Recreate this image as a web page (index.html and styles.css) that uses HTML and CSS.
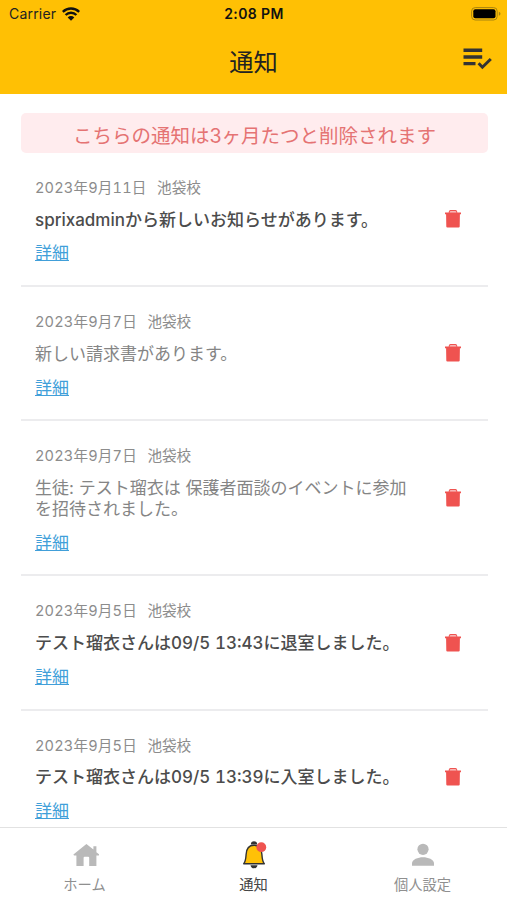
FILE: index.html
```html
<!DOCTYPE html>
<html lang="ja">
<head>
    <meta charset="UTF-8">
    <meta name="viewport" content="width=device-width, initial-scale=1.0">
    <title>通知</title>
    <link rel="stylesheet" href="styles.css">
</head>
<body>

    <!-- Icons used more than once -->
    <svg class="defs" width="0" height="0">
        <symbol id="trash" viewBox="0 0 18 20">
            <path d="M5 3.8l.6-1.6q.2-.7 1-.7h4.8q.8 0 1 .7l.6 1.6" fill="#f8b5b4" stroke="currentColor" stroke-width="1.1"/>
            <path d="M1 3.5h16v1.7h-1.1l-.2 12.3q0 1.1-1.1 1.1H3.4q-1.1 0-1.1-1.1L2.1 5.2H1z" fill="currentColor"/>
        </symbol>
    </svg>

    <div class="app">
        <!-- Status bar and title -->
        <header class="header">
            <div class="status">
                <div class="carrier">
                    <span>Carrier</span>
                    <svg class="wifi" width="18" height="14" viewBox="0 0 18 14">
                        <path d="M.8 4.9a11.6 11.6 0 0 1 16.4 0M3.6 8a7.6 7.6 0 0 1 10.8 0" fill="none" stroke="#111" stroke-width="2.4"/>
                        <path d="M5.7 10.4a4.6 4.6 0 0 1 6.6 0L9 13.7z" fill="#111"/>
                    </svg>
                </div>
                <div class="time">2:08 PM</div>
                <svg class="battery" width="30" height="14" viewBox="0 0 30 14">
                    <rect x=".6" y=".6" width="25.6" height="12.4" rx="3.6" fill="none" stroke="#a88410"/>
                    <rect x="2.3" y="2.3" width="22.2" height="9" rx="2" fill="#000"/>
                    <path d="M27.8 4.8q1.7.7 1.7 2t-1.7 2z" fill="#a88410"/>
                </svg>
            </div>
            <div class="title-row">
                <h1>通知</h1>
                <svg class="read-all" width="29" height="22" viewBox="0 0 29 22">
                    <path d="M.5 2.3h18.7M.5 9h18.7M.5 15.6h12" fill="none" stroke="#333" stroke-width="3.4"/>
                    <path d="M15.6 15.2l3.8 4L27.8 11" fill="none" stroke="#333" stroke-width="3"/>
                </svg>
            </div>
        </header>

        <!-- Notification list -->
        <main class="content">
            <div class="notice">こちらの通知は3ヶ月たつと削除されます</div>

            <div class="item unread">
                <div class="item-body">
                    <div class="meta"><span class="date">2023年9月11日</span><span>池袋校</span></div>
                    <div class="message">sprixadminから新しいお知らせがあります。</div>
                    <a class="detail" href="#">詳細</a>
                </div>
                <svg class="trash"><use href="#trash"/></svg>
            </div>

            <div class="item">
                <div class="item-body">
                    <div class="meta"><span class="date">2023年9月7日</span><span>池袋校</span></div>
                    <div class="message">新しい請求書があります。</div>
                    <a class="detail" href="#">詳細</a>
                </div>
                <svg class="trash"><use href="#trash"/></svg>
            </div>

            <div class="item">
                <div class="item-body">
                    <div class="meta"><span class="date">2023年9月7日</span><span>池袋校</span></div>
                    <div class="message">生徒: テスト瑠衣は 保護者面談のイベントに参加<br>を招待されました。</div>
                    <a class="detail" href="#">詳細</a>
                </div>
                <svg class="trash"><use href="#trash"/></svg>
            </div>

            <div class="item unread">
                <div class="item-body">
                    <div class="meta"><span class="date">2023年9月5日</span><span>池袋校</span></div>
                    <div class="message">テスト瑠衣さんは09/5 13:43に退室しました。</div>
                    <a class="detail" href="#">詳細</a>
                </div>
                <svg class="trash"><use href="#trash"/></svg>
            </div>

            <div class="item unread">
                <div class="item-body">
                    <div class="meta"><span class="date">2023年9月5日</span><span>池袋校</span></div>
                    <div class="message">テスト瑠衣さんは09/5 13:39に入室しました。</div>
                    <a class="detail" href="#">詳細</a>
                </div>
                <svg class="trash"><use href="#trash"/></svg>
            </div>
        </main>

        <!-- Bottom tabs -->
        <nav class="tabs">
            <div class="tab">
                <svg width="28" height="30" viewBox="0 0 28 30">
                    <path d="M15.4 4L2.4 14.6l.6.8h2.4V26h7.2v-8.2q0-1 1-1h3.6q1 0 1 1V26h7.2V15.4h2.4l.6-.8-3-2.4V6.2h-3v3.4z" fill="#b9b9b9"/>
                </svg>
                <span>ホーム</span>
            </div>
            <div class="tab active">
                <svg width="28" height="30" viewBox="0 0 28 30">
                    <path d="M10.8 4.5Q11 1.2 14 1.2t3.2 3.3z" fill="#333"/>
                    <path d="M10.5 25.2h7Q17 28.3 14 28.3t-3.5-3.1z" fill="#333"/>
                    <path d="M3.7 23.7c2-2.1 2.1-4.8 2.4-9.2C6.4 8.3 8.8 5.2 14 5.2s7.6 3.1 7.9 9.3c.3 4.4.4 7.1 2.4 9.2z" fill="#ffc107" stroke="#333" stroke-width="1.4" stroke-linejoin="round"/>
                    <circle cx="21.3" cy="7.2" r="4.9" fill="#ef5350"/>
                </svg>
                <span>通知</span>
            </div>
            <div class="tab">
                <svg width="28" height="30" viewBox="0 0 28 30">
                    <circle cx="14" cy="9.3" r="5.6" fill="#b9b9b9"/>
                    <path d="M3 25.7v-2.5c0-3.7 6-6 11-6s11 2.3 11 6v2.5z" fill="#b9b9b9"/>
                </svg>
                <span>個人設定</span>
            </div>
        </nav>
    </div>

</body>
</html>
```
FILE: styles.css
```css
/* Reset and basic styles */
html, body {
    margin: 0;
    padding: 0;
    background: #fff;
    font-family: Inter, "Noto Sans CJK JP", sans-serif;
}

.defs {
    display: block;
}

.app {
    display: flex;
    flex-direction: column;
    height: 900px;
    overflow: hidden;
}

/* Header */
.header {
    flex: none;
    height: 94px;
    background: #ffc004;
    color: #222;
}

.status {
    display: grid;
    grid-template-columns: 1fr auto 1fr;
    align-items: center;
    height: 27px;
    padding: 0 6px 0 9px;
    font-size: 14px;
    letter-spacing: 0.2px;
}

.carrier {
    display: flex;
    align-items: center;
    gap: 6px;
}

.time {
    padding-right: 2px;
    font-weight: 600;
    letter-spacing: 0.4px;
    color: #111;
}

.battery {
    justify-self: end;
}

.title-row {
    display: grid;
    grid-template-columns: 1fr auto 1fr;
    align-items: center;
    height: 67px;
    padding: 0 15px;
}

.title-row h1 {
    grid-column: 2;
    margin: 0;
    padding-top: 3px;
    font-size: 24.3px;
    font-weight: 400;
    line-height: 34px;
}

.read-all {
    justify-self: end;
    margin-bottom: 4px;
}

/* Notification list */
.content {
    flex: 1;
    min-height: 0;
    padding: 19px 19px 0 21px;
    overflow: hidden;
}

.notice {
    height: 40px;
    border-radius: 5px;
    background: #ffecee;
    color: #e57373;
    font-size: 19.5px;
    line-height: 46px;
    text-align: center;
}

.item {
    display: flex;
    align-items: center;
    justify-content: space-between;
    padding: 24px 26px 20.8px 14px;
    border-bottom: 2px solid #ececee;
}

.meta {
    display: flex;
    gap: 10.5px;
    color: #8c8c8c;
    font-size: 14.6px;
    line-height: 22px;
}

.date {
    font-variant-numeric: tabular-nums;
    letter-spacing: 0.15px;
}

.message {
    margin: 10.5px 0 12.1px;
    color: #858585;
    font-size: 17px;
    line-height: 20.8px;
    white-space: nowrap;
}

.unread .message {
    color: #4c4c4c;
    font-weight: 500;
    font-variant-numeric: tabular-nums;
}

.detail {
    display: block;
    color: #419fd9;
    font-size: 17px;
    line-height: 22px;
}

.trash {
    flex: none;
    width: 18px;
    height: 20px;
    margin-bottom: 3px;
    color: #ef5350;
}

/* Bottom tabs */
.tabs {
    flex: none;
    display: grid;
    grid-template-columns: repeat(3, 1fr);
    height: 72px;
    border-top: 1px solid #e2e2e2;
    background: #fff;
}

.tab {
    display: flex;
    flex-direction: column;
    align-items: center;
    padding-top: 12px;
    color: #8f8f8f;
    font-size: 14.3px;
    line-height: 20px;
}

.tab span {
    margin-top: 5px;
}

.tab.active {
    color: #444;
}
```
